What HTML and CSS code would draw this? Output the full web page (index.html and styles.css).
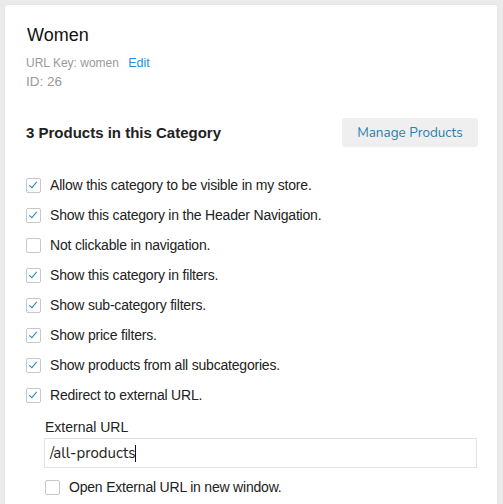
FILE: index.html
```html
<!DOCTYPE html>
<html>
<head>
<meta charset="utf-8">
<link rel="stylesheet" href="styles.css">
</head>
<body>
<div class="card">
  <h1 class="title">Women</h1>
  <div class="urlkey">URL Key: women <a class="edit">Edit</a></div>
  <div class="id">ID: 26</div>
  <div class="products-row">
    <h2 class="products">3 Products in this Category</h2>
    <button class="manage">Manage Products</button>
  </div>
  <ul class="options">
    <li class="opt"><span class="cb on"></span>Allow this category to be visible in my store.</li>
    <li class="opt"><span class="cb on"></span>Show this category in the Header Navigation.</li>
    <li class="opt"><span class="cb"></span>Not clickable in navigation.</li>
    <li class="opt"><span class="cb on"></span>Show this category in filters.</li>
    <li class="opt"><span class="cb on"></span>Show sub-category filters.</li>
    <li class="opt"><span class="cb on"></span>Show price filters.</li>
    <li class="opt"><span class="cb on"></span>Show products from all subcategories.</li>
    <li class="opt"><span class="cb on"></span>Redirect to external URL.</li>
  </ul>
  <div class="external">
    <div class="ext-label">External URL</div>
    <div class="ext-input">/all-products<span class="caret"></span></div>
    <div class="opt"><span class="cb"></span>Open External URL in new window.</div>
  </div>
</div>
</body>
</html>
```
FILE: styles.css
```css
html, body { margin: 0; padding: 0; }
body {
  background: #ebebeb;
  font-family: "Liberation Sans", Arial, sans-serif;
  color: #222;
  padding: 5px 6px 0 5px;
  height: 504px;
  box-sizing: border-box;
  overflow: hidden;
}
.card {
  background: #fff;
  border-radius: 3px;
  box-shadow: 0 0 2px rgba(0,0,0,0.08);
  padding: 20px 20px 40px 20px;
  height: 600px;
}
.title {
  margin: 0 0 0 2px;
  font-size: 18px;
  font-weight: normal;
  color: #111;
  line-height: 20px;
}
.urlkey {
  margin-top: 10px;
  margin-left: 1px;
  font-size: 12px;
  color: #999;
  line-height: 16px;
}
.edit {
  color: #1c8fd6;
  margin-left: 6px;
  font-size: 12.5px;
}
.id {
  margin-top: 3px;
  margin-left: 1px;
  font-size: 13.5px;
  color: #999;
  line-height: 16px;
}
.products-row {
  display: flex;
  align-items: center;
  justify-content: space-between;
  margin-top: 28px;
  margin-left: 1px;
}
.products {
  margin: 0;
  font-size: 15px;
  font-weight: bold;
  color: #222;
}
.manage {
  background: #efefef;
  border: none;
  border-radius: 3px;
  width: 136px;
  height: 29px;
  font-family: "Nunito", "Lato", sans-serif;
  font-size: 13.5px;
  color: #2b7fae;
  padding: 0;
  margin-right: -1px;
}
.options {
  list-style: none;
  margin: 23px 0 0 0;
  padding: 0;
}
.opt {
  display: flex;
  align-items: center;
  height: 30px;
  font-size: 14px;
  letter-spacing: -0.2px;
  color: #222;
}
.cb {
  width: 13px;
  height: 13px;
  border: 1px solid #c8c8c8;
  border-radius: 2px;
  margin-right: 9px;
  margin-left: 1px;
  position: relative;
  flex: none;
}
.cb.on::after {
  content: "";
  position: absolute;
  left: 4px;
  top: 1.5px;
  width: 3px;
  height: 7px;
  border-right: 1.6px solid #1f7fc4;
  border-bottom: 1.6px solid #1f7fc4;
  transform: rotate(40deg);
}
.external {
  padding-left: 19px;
}
.ext-label {
  font-size: 14px;
  color: #222;
  margin-top: 9px;
  line-height: 16px;
  margin-left: 1px;
}
.ext-input {
  margin-top: 3px;
  height: 30px;
  box-sizing: border-box;
  border: 1px solid #e2e2e2;
  display: flex;
  align-items: center;
  padding-left: 5px;
  font-family: "Nunito", "Lato", sans-serif;
  font-size: 15px;
  color: #222;
}
.caret {
  display: inline-block;
  width: 1px;
  height: 17px;
  background: #111;
}
.external .opt { margin-top: 4px; }
```
